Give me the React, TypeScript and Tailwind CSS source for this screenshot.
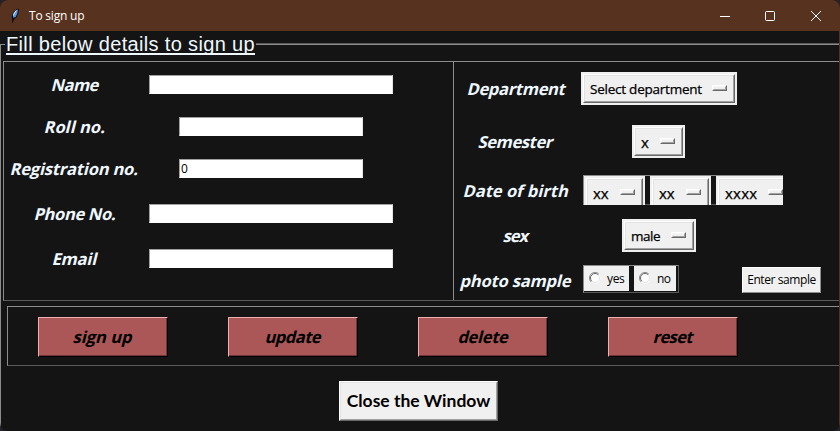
import { useLayoutEffect, useRef, useState, type ReactNode } from "react";
import clsx from "clsx";

/** Text tracked so that its advance equals `w` pixels. */
function Fit({ w, className, children }: { w: number; className?: string; children: string }) {
  const ref = useRef<HTMLSpanElement>(null);
  const [spacing, setSpacing] = useState(0);
  useLayoutEffect(() => {
    if (ref.current) {
      setSpacing((w - ref.current.offsetWidth) / children.length);
    }
  }, [w, children]);
  return (
    <span ref={ref} className={clsx("inline-block whitespace-pre", className)} style={{ letterSpacing: spacing }}>
      {children}
    </span>
  );
}

const ui = "font-['Open_Sans','Noto_Sans',sans-serif]";

function Label({ w, children }: { w: number; children: string }) {
  return (
    <Fit w={w - 1} className="-skew-x-[14deg] text-[16.5px] leading-5 font-bold text-[#f0f8ff]">
      {children}
    </Fit>
  );
}

function FieldRow({ label, w, short, value, className }: { label: string; w: number; short?: boolean; value?: string; className?: string }) {
  return (
    <div className={clsx("flex h-[19px] items-center", className)}>
      <div className="flex w-[142px] justify-center pl-px">
        <Label w={w}>{label}</Label>
      </div>
      <div className="ml-[3px] flex w-[244px] justify-center">
        <div
          className={clsx(
            "h-[19px] border border-t-[#a0a0a0] border-r-[#e3e3e3] border-b-white border-l-[#a0a0a0] bg-white pl-px text-xs leading-[18px] text-black",
            short ? "w-[184px]" : "w-full",
          )}
        >
          {value}
        </div>
      </div>
    </div>
  );
}

function OptionMenu({ width, textW, textClass = "text-[13.5px]", children }: { width: string; textW: number; textClass?: string; children: string }) {
  return (
    <div className={clsx("h-[33px] shrink-0 bg-[#f0f0f0] p-0.5", width)}>
      <div className="h-[29px] border border-t-white border-r-[#696969] border-b-[#696969] border-l-white">
        <div className="flex h-[27px] items-start border border-t-[#e3e3e3] border-r-[#a0a0a0] border-b-[#a0a0a0] border-l-[#e3e3e3] pt-1 pr-1.5 pl-[5px]">
          <Fit w={textW} className={clsx("leading-[19px] font-medium text-black [-webkit-text-stroke:0.25px_black]", textClass)}>
            {children}
          </Fit>
          <div className="mt-[5px] ml-auto h-1.5 w-[15px] shrink-0 border border-t-white border-r-[#696969] border-b-[#696969] border-l-white">
            <div className="h-1 border border-t-[#f6f6f6] border-r-[#a0a0a0] border-b-[#a0a0a0] border-l-[#f6f6f6]" />
          </div>
        </div>
      </div>
    </div>
  );
}

function ControlRow({ label, w, className, labelClass, children }: { label: string; w: number; className: string; labelClass?: string; children: ReactNode }) {
  return (
    <div className={clsx("flex items-center", className)}>
      <div className={clsx("flex w-[124px] shrink-0 justify-center pl-px", labelClass)}>
        <Label w={w}>{label}</Label>
      </div>
      {children}
    </div>
  );
}

function Radio({ className, w, children }: { className: string; w: number; children: string }) {
  return (
    <div className={clsx("flex h-[25px] bg-[#f0f0f0] pl-[5px]", className)}>
      <svg className="mt-1.5 h-3 w-3" viewBox="0 0 12 12" fill="none">
        <circle cx="6" cy="6" r="5.5" fill="#fff" />
        <path d="M2.1 9.9A5.5 5.5 0 0 1 9.9 2.1" stroke="#8a8a8a" />
        <path d="M2.8 9.2A4.5 4.5 0 0 1 9.2 2.8" stroke="#696969" />
        <path d="M2.8 9.2A4.5 4.5 0 0 0 9.2 2.8" stroke="#e3e3e3" />
      </svg>
      <Fit w={w} className="mt-[5px] ml-1.5 text-xs leading-4 text-black">
        {children}
      </Fit>
    </div>
  );
}

const actions = [
  { name: "sign up", w: 59 },
  { name: "update", w: 56 },
  { name: "delete", w: 50 },
  { name: "reset", w: 39 },
];

export default function App() {
  return (
    <div className="h-[431px] w-[840px] overflow-hidden bg-[#23222b]">
      <div className={clsx("flex h-full flex-col overflow-hidden rounded-lg bg-[#141414]", ui)}>
        <header className="flex h-[31px] shrink-0 items-center bg-[#57321e] pl-2 text-white">
          <svg className="h-4 w-4" viewBox="0 0 16 16">
            <path d="M4 15 4.3 11 3.6 8.5 5.5 4.5 8 1.5 10.8.5 10.5 4.5 8.8 9 6 11.5Z" fill="#0b0b12" />
            <path d="M5 10.5 5.4 6.5 7.5 3 10 1.3 9.4 5 7.7 9Z" fill="#4f9aea" />
            <path d="M5 9 5.2 6 7.4 2.7 9 2 6.6 6Z" fill="#c6e5fb" />
            <path d="M4.3 14.5 6.2 9" stroke="#0b0b12" strokeWidth=".8" fill="none" />
          </svg>
          <Fit w={55} className="ml-[5px] pt-px text-xs">To sign up</Fit>
          <div className="mr-[19px] ml-auto flex items-center">
            <svg className="h-2.5 w-2.5" viewBox="0 0 10 10"><path d="M0 5.5H10" stroke="#fff" /></svg>
            <svg className="ml-[35px] h-2.5 w-2.5" viewBox="0 0 10 10"><rect x=".5" y=".5" width="9" height="9" rx="1" fill="none" stroke="#fff" /></svg>
            <svg className="ml-9 h-2.5 w-2.5" viewBox="0 0 10 10"><path d="M0 0 10 10M10 0 0 10" stroke="#fff" /></svg>
          </div>
        </header>

        <main className="flex grow flex-col border-r border-[#57321e]">
          <div className="flex h-[14px] items-end">
            <div className="h-px w-[5px] bg-[#8c8c8c]" />
            <h1 className="relative top-[10px] h-[22px] w-[251px] pl-px">
              <div className="h-[22px] w-[249px] border-b-2 border-[#f0f8ff] pt-px font-['Liberation_Sans',Arial,sans-serif] text-xl leading-5 text-[#f0f8ff]">
                <Fit w={249}>Fill below details to sign up</Fit>
              </div>
            </h1>
            <div className="h-0.5 grow border-t border-b border-t-[#5a5a5a] border-b-[#8c8c8c]" />
          </div>

          <div className="grow border-l border-[#8c8c8c] pt-4 pl-0.5">
            <section className="flex h-[240px] border border-t-[#8c8c8c] border-r-0 border-b-[#5a5a5a] border-l-[#8c8c8c]">
              <div className="w-[449px] pt-[13px]">
                <FieldRow label="Name" w={48} />
                <FieldRow label="Roll no." w={62} short className="mt-[23px]" />
                <FieldRow label="Registration no." w={129} short value="0" className="mt-[23px]" />
                <FieldRow label="Phone No." w={83} className="mt-[26px]" />
                <FieldRow label="Email" w={45} className="mt-[26px]" />
              </div>

              <div className="grow border-l border-[#8c8c8c] pt-2.5">
                <ControlRow label="Department" w={99} className="h-[33px]">
                  <div className="flex w-[162px] justify-center">
                    <OptionMenu width="w-[156px]" textW={112}>Select department</OptionMenu>
                  </div>
                </ControlRow>
                <ControlRow label="Semester" w={75} className="mt-5 h-[33px]">
                  <div className="flex w-[161px] justify-center">
                    <OptionMenu width="w-[53px]" textW={8} textClass="text-[15px]">x</OptionMenu>
                  </div>
                </ControlRow>
                <ControlRow label="Date of birth" w={106} className="mt-[17px] h-[30px]" labelClass="pt-0.5">
                  <div className="ml-[5px] flex h-[30px] w-[200px] gap-[5px] overflow-hidden border-t border-l border-[#8c8c8c] bg-[linear-gradient(to_top,#5a5a5a_1px,transparent_1px)]">
                    <OptionMenu width="w-[61px]" textW={16} textClass="text-[15px]">xx</OptionMenu>
                    <OptionMenu width="w-[61px]" textW={16} textClass="text-[15px]">xx</OptionMenu>
                    <OptionMenu width="w-[77px]" textW={32} textClass="text-[15px]">xxxx</OptionMenu>
                  </div>
                </ControlRow>
                <ControlRow label="sex" w={26} className="mt-3.5 h-[33px]">
                  <div className="flex w-[162px] justify-center">
                    <OptionMenu width="w-[74px]" textW={29}>male</OptionMenu>
                  </div>
                </ControlRow>
                <ControlRow label="photo sample" w={112} className="mt-[13px] h-7" labelClass="pt-1">
                  <div className="ml-[5px] flex h-7 w-24 gap-[5px] border border-t-[#8c8c8c] border-r-[#5a5a5a] border-b-[#5a5a5a] border-l-[#8c8c8c]">
                    <Radio className="w-[45px]" w={17}>yes</Radio>
                    <Radio className="w-[42px]" w={14}>no</Radio>
                  </div>
                  <button className="mt-0.5 ml-[63px] h-[26px] w-[79px] border border-t-white border-r-[#8c8c8c] border-b-[#8c8c8c] border-l-white bg-[#f0f0f0] text-xs leading-4 text-black">
                    <Fit w={69}>Enter sample</Fit>
                  </button>
                </ControlRow>
              </div>
            </section>

            <section className="mt-[5px] ml-1 flex h-[60px] gap-[60px] border border-t-[#8c8c8c] border-r-0 border-b-[#5a5a5a] border-l-[#8c8c8c] pt-2.5 pl-[30px]">
              {actions.map((a) => (
                <button key={a.name} className="h-10 w-[130px] border border-t-[#efb0b0] border-r-black border-b-black border-l-[#efb0b0]">
                  <span className="flex h-[38px] items-center justify-center border-r border-b border-[#6d3535] bg-[#ab5757] pl-0.5">
                    <Fit w={a.w} className="-skew-x-[14deg] text-[16.5px] leading-5 font-bold text-black">{a.name}</Fit>
                  </span>
                </button>
              ))}
            </section>

            <button className="mt-[15px] ml-[336px] block h-10 w-[159px] border border-t-white border-r-[#696969] border-b-[#696969] border-l-white">
              <span className="flex h-[38px] items-center justify-center border border-t-[#e3e3e3] border-r-[#a0a0a0] border-b-[#a0a0a0] border-l-[#e3e3e3] bg-[#f0f0f0]">
                <Fit w={144} className="font-['Lato',sans-serif] text-[17.5px] leading-5 font-bold text-black">Close the Window</Fit>
              </span>
            </button>
          </div>
        </main>
      </div>
    </div>
  );
}
